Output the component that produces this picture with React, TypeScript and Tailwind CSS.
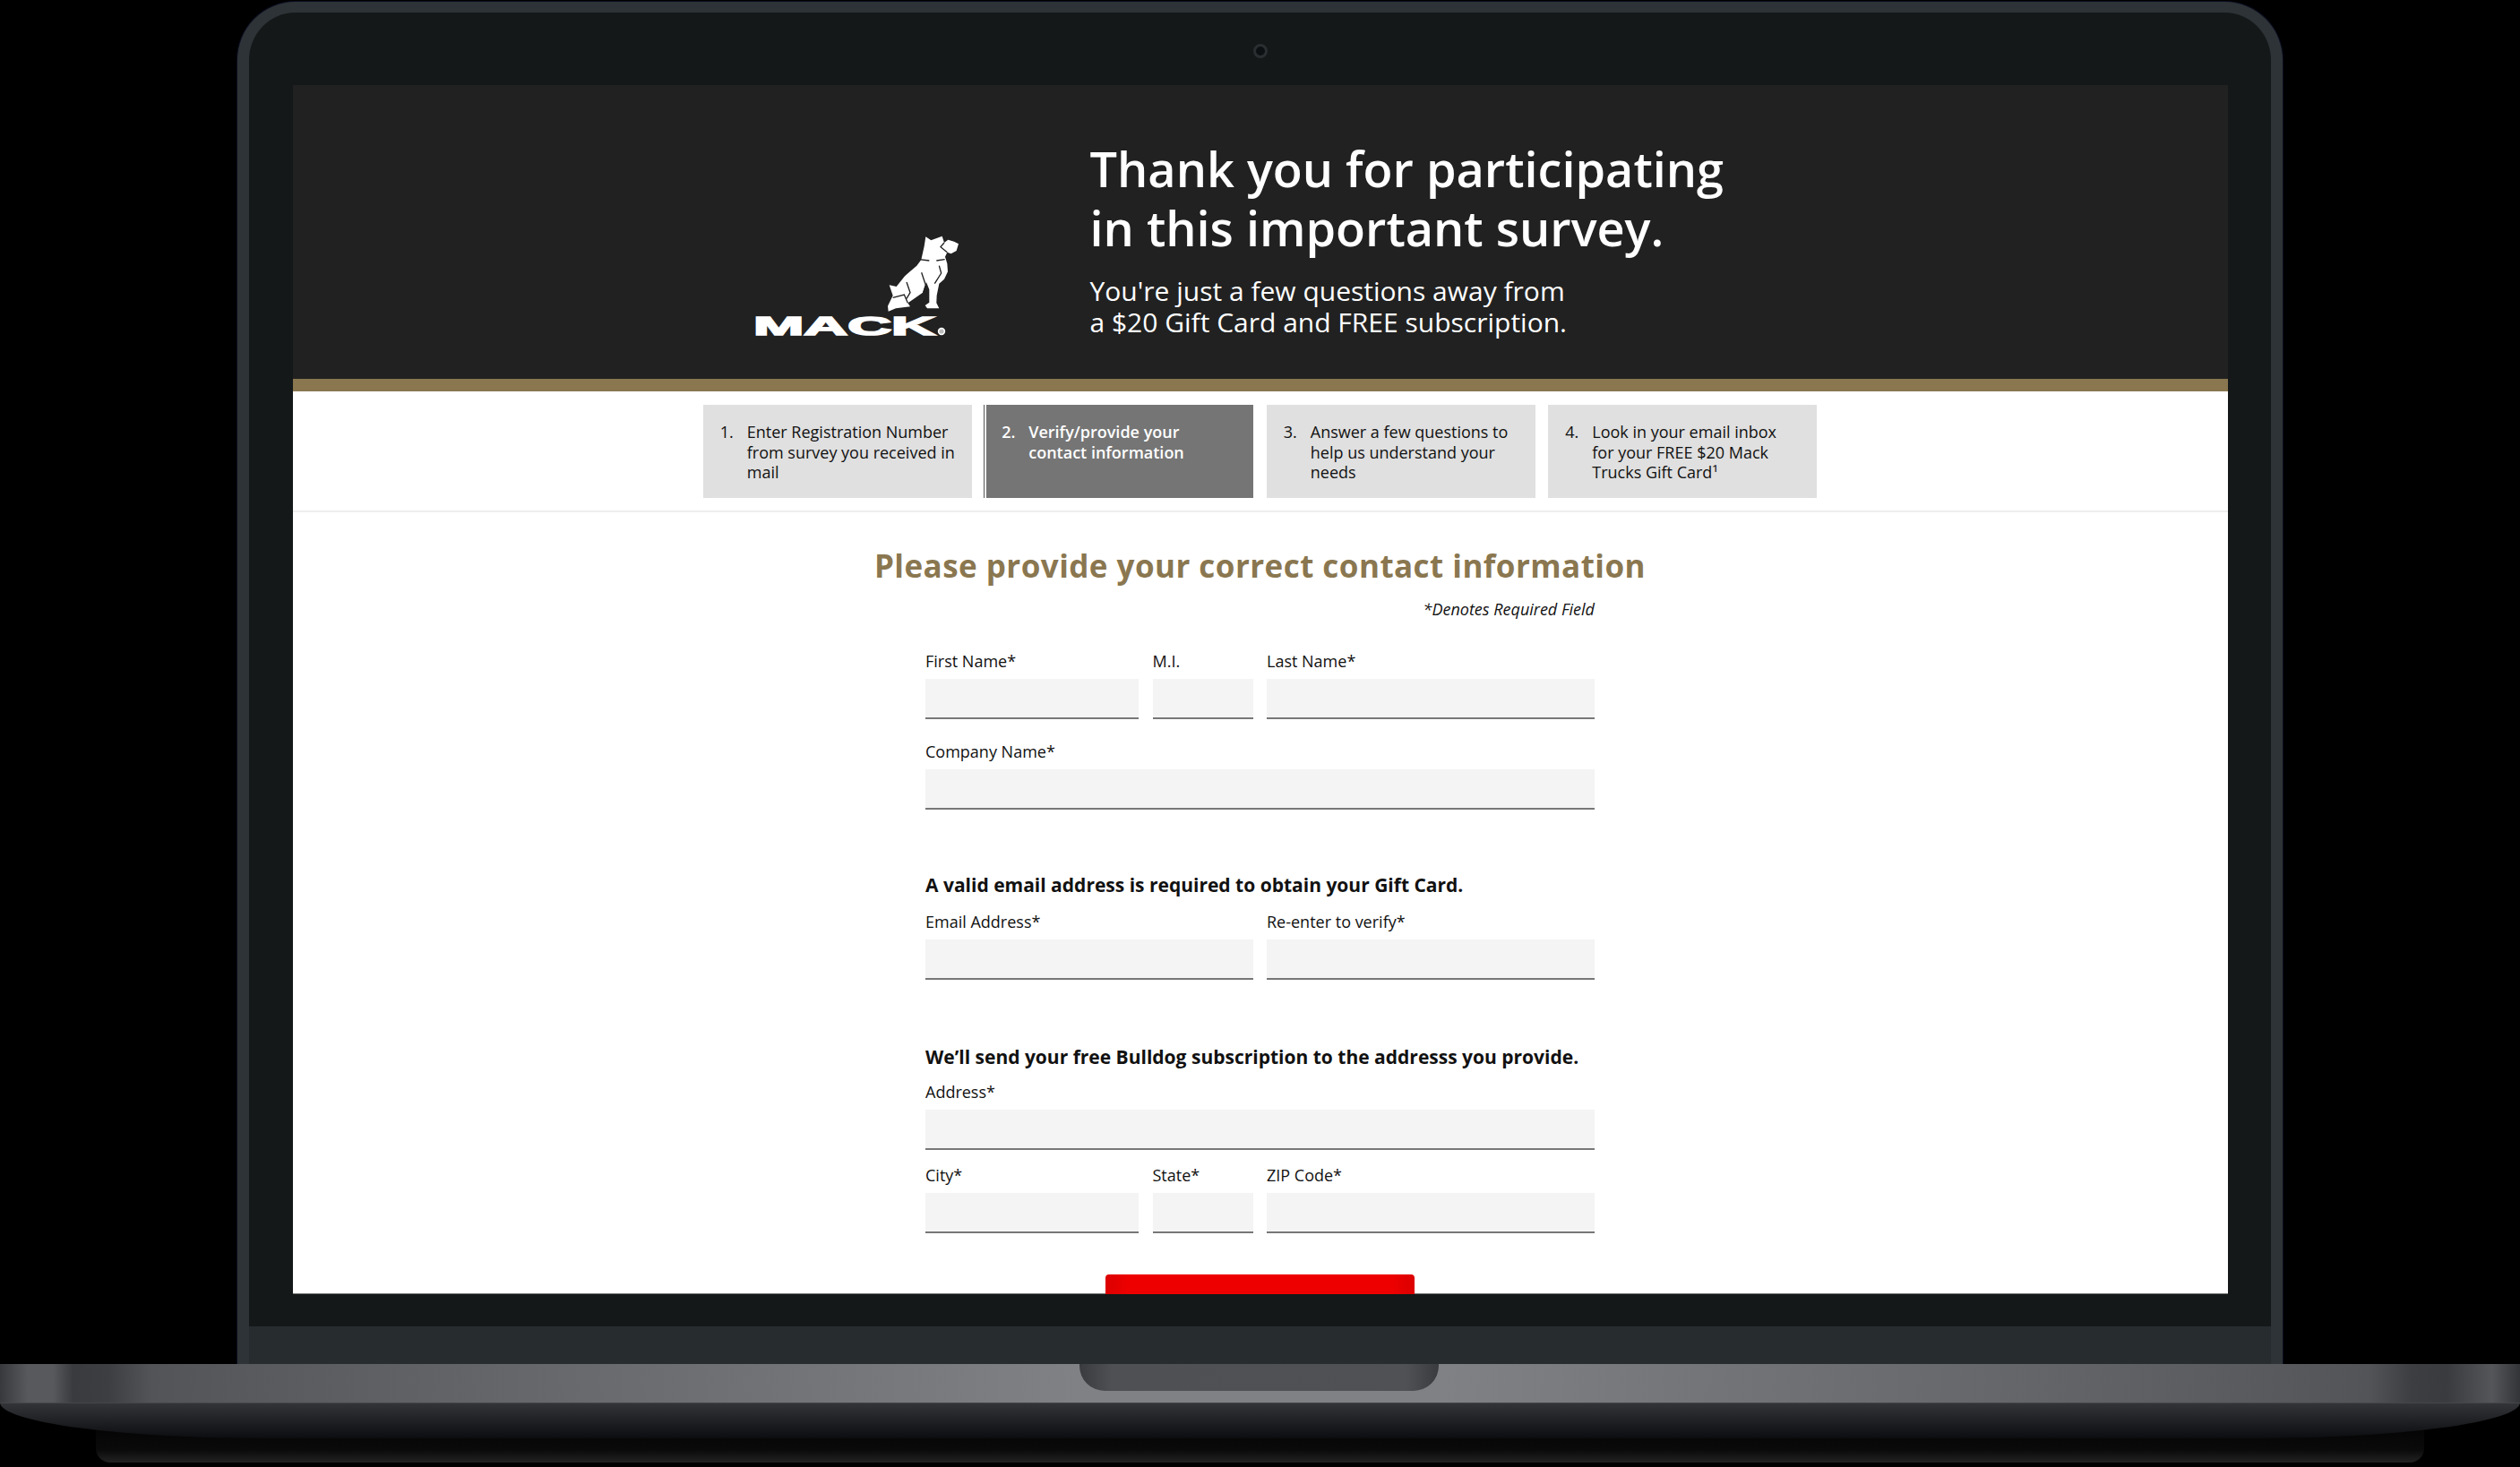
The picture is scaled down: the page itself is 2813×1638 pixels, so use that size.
import React from 'react';

const steps = [
  { n: '1.', text: 'Enter Registration Number from survey you received in mail' },
  { n: '2.', text: 'Verify/provide your contact information', active: true },
  { n: '3.', text: 'Answer a few questions to help us understand your needs' },
  { n: '4.', text: 'Look in your email inbox for your FREE $20 Mack Trucks Gift Card¹' },
];

const MackLogo = () => (
  <svg width="234" height="125" viewBox="0 0 234 125" className="block">
    <g transform="translate(141 0) scale(0.3333)">
      <path
        fill="#fff"
        d="M160 28 L178 40 L215 26 L222 48 L235 38 L255 44 L270 52 L263 75 L245 85 L232 80 L225 95 L232 118 L234 145 L222 170 L205 185 L197 225 L196 250 L205 268 L165 268 L158 258 L172 248 L172 205 L162 180 L150 215 L118 238 L100 250 L108 262 L60 268 L35 278 L33 260 L50 225 L38 190 L62 195 L90 160 L130 125 L145 105 L155 60 Z"
      />
      <path
        fill="none"
        stroke="#212121"
        strokeWidth="4"
        d="M138 104 L172 108 M196 108 L224 104 M222 48 L210 62 L232 80 M146 148 L160 190 L152 215 M96 180 L108 215 L96 235 M50 232 L88 222 L100 250 M205 125 L212 150 L190 185"
      />
    </g>
    <text
      x="2"
      y="119"
      textLength="203"
      lengthAdjust="spacingAndGlyphs"
      fill="#fff"
      stroke="#fff"
      strokeWidth="1.6"
      fontFamily="'Liberation Sans', sans-serif"
      fontWeight="700"
      fontSize="29"
    >
      MACK
    </text>
    <circle cx="212" cy="115" r="3.4" fill="#bbb" stroke="#fff" strokeWidth="1.6" />
  </svg>
);

const Field = ({ label, className }: { label: string; className: string }) => (
  <div className={className}>
    <div className="h-6 text-[18px] leading-6 text-[#111]">{label}</div>
    <div className="mt-2 h-[45px] bg-[#f4f4f4] border-b-2 border-[#777]" />
  </div>
);

const Step = ({ n, text, active }: { n: string; text: string; active?: boolean }) => (
  <div
    className={
      active
        ? 'flex w-[300px] h-[104px] pt-[19px] pl-[17px] pr-[18px] bg-[#757575] text-white font-semibold border-l-2 border-white shadow-[-1px_0_0_#555]'
        : 'flex w-[300px] h-[104px] pt-[19px] pl-[19px] pr-[18px] bg-[#e0e0e0] text-[#111] font-medium'
    }
  >
    <span className="w-[30px] flex-none text-[18px] leading-[22.5px]">{n}</span>
    <span className="text-[18px] leading-[22.5px]">{text}</span>
  </div>
);

const Screen = () => (
  <div className="w-[2160px] h-[1350px] mx-auto overflow-hidden bg-white flex flex-col">
    <div className="h-[328px] flex-none bg-[#212121] flex pl-[512px]">
      <div className="mt-[160px]">
        <MackLogo />
      </div>
      <div className="ml-[144px] pt-[60px] text-white">
        <div className="text-[54px] leading-[66px] font-semibold">
          Thank you for participating
          <br />
          in this important survey.
        </div>
        <div className="mt-5 text-[30px] leading-[35px]">
          You're just a few questions away from
          <br />
          a $20 Gift Card and FREE subscription.
        </div>
      </div>
    </div>
    <div className="h-[14px] flex-none bg-[#8a7750]" />
    <div className="flex-none flex justify-center gap-[14.5px] pt-[15px] pb-[14px] border-b-2 border-[#eee]">
      {steps.map((s) => (
        <Step key={s.n} n={s.n} text={s.text} active={s.active} />
      ))}
    </div>
    <div className="flex-1 flex flex-col">
      <div className="w-[747px] mx-auto flex-1">
        <h1 className="mt-9 -mx-[100px] text-center text-[35px] leading-[48px] font-bold tracking-[0.45px] text-[#8a7750] whitespace-nowrap">
          Please provide your correct contact information
        </h1>
        <div className="mt-3 text-right text-[18px] leading-6 italic text-[#111]">*Denotes Required Field</div>

        <div className="mt-[34px] flex gap-[15.5px]">
          <Field label="First Name*" className="w-[238px]" />
          <Field label="M.I." className="w-[112px]" />
          <Field label="Last Name*" className="flex-1" />
        </div>
        <div className="mt-6">
          <Field label="Company Name*" className="w-full" />
        </div>

        <div className="mt-[70px] text-[21px] leading-7 font-bold text-[#111]">
          A valid email address is required to obtain your Gift Card.
        </div>
        <div className="mt-[15px] flex gap-[15px]">
          <Field label="Email Address*" className="flex-1" />
          <Field label="Re-enter to verify*" className="flex-1" />
        </div>

        <div className="mt-[72px] text-[21px] leading-7 font-bold text-[#111]">
          We’ll send your free Bulldog subscription to the addresss you provide.
        </div>
        <div className="mt-[13px]">
          <Field label="Address*" className="w-full" />
        </div>
        <div className="mt-4 flex gap-[15.5px]">
          <Field label="City*" className="w-[238px]" />
          <Field label="State*" className="w-[112px]" />
          <Field label="ZIP Code*" className="flex-1" />
        </div>
      </div>
      <div className="flex h-[22px] flex-none">
        <div className="flex-1 border-b border-[#777]" />
        <div className="w-[345px] rounded-t-[4px] bg-[linear-gradient(90deg,#dc0000,#ee0000_8%,#ee0000_92%,#dc0000)]" />
        <div className="flex-1 border-b border-[#777]" />
      </div>
    </div>
  </div>
);

export default function App() {
  return (
    <div className="w-[2813px] h-[1638px] bg-black overflow-hidden font-['Open_Sans',sans-serif]">
      <div className="h-[2px]" />
      <div className="w-[2283px] h-[1521px] ml-[265px] flex flex-col overflow-hidden rounded-t-[65px] border-x-[13px] border-t-[12px] border-[#2d3336] bg-[#141819] shadow-[0_0_0_1px_#0b0d20]">
        <div className="h-[81px] flex-none flex justify-center pt-[35px]">
          <div className="w-4 h-4 rounded-full border-[3px] border-[#2a2e30] bg-[#0d1012]" />
        </div>
        <Screen />
        <div className="h-9 flex-none" />
        <div className="flex-1 bg-[#272c2f]" />
      </div>
      <div className="h-[43px] flex justify-center items-start bg-[linear-gradient(90deg,#38393c_0,#58595c_1.1%,#58595c_2.1%,#3a3b3e_2.9%,#3d3e41_4.3%,#535458_6%,#58595c_9.4%,#808184_42.7%,#808184_57.3%,#58595c_90.6%,#535458_94%,#3d3e41_95.7%,#3a3b3e_97.1%,#55565a_98.9%,#333437_100%)]">
        <div className="w-[401px] h-[30px] -ml-[2px] rounded-b-[28px] bg-[linear-gradient(90deg,#3a3b3e,#4f5054_9%,#505155_91%,#3a3b3e)]" />
      </div>
      <div className="relative z-10 h-10 border-t border-[#45464a] rounded-bl-[300px_40px] rounded-br-[300px_40px] bg-[linear-gradient(180deg,#333438,#0c0d10)]" />
      <div className="h-9 -mt-[9px] mx-[107px] rounded-b-[16px] bg-[linear-gradient(180deg,#050505,#0a0a0a_60%,#222)]" />
    </div>
  );
}
